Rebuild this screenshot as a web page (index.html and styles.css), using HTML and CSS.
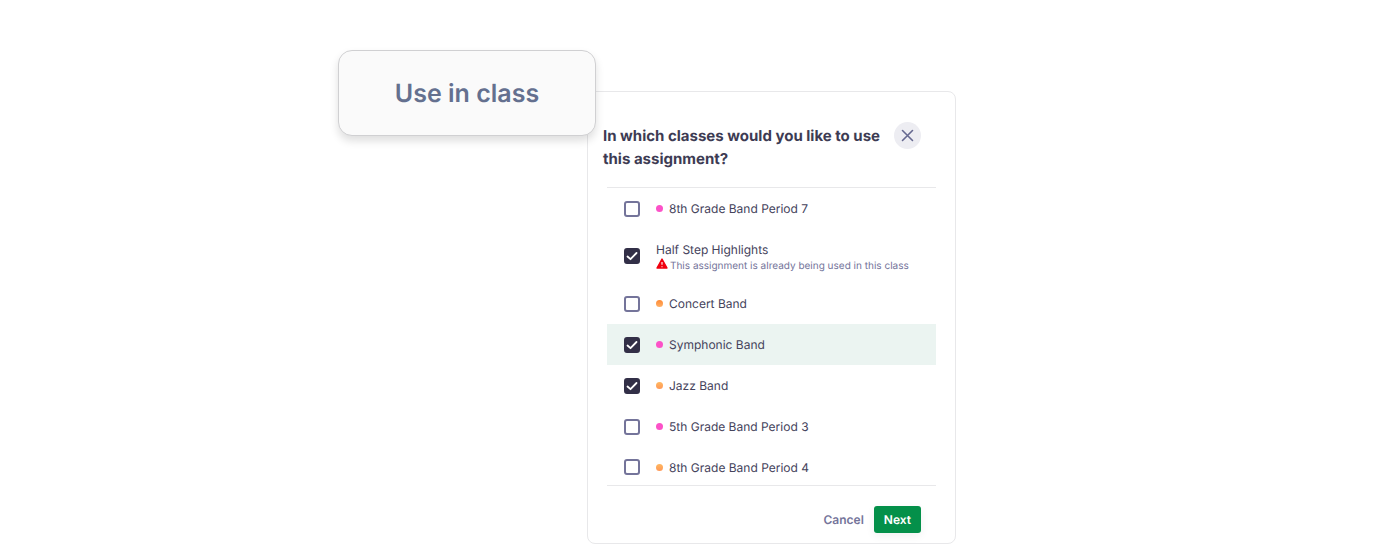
FILE: index.html
```html
<!DOCTYPE html>
<html lang="en">
<head>
    <meta charset="UTF-8">
    <meta name="viewport" content="width=device-width, initial-scale=1.0">
    <title>Use in class</title>
    <link rel="stylesheet" href="styles.css">
</head>
<body>
    <main class="stage">
        <button type="button" class="use-button">Use in class</button>
        <form class="dialog">
            <div class="dialog-header">
                <h1>In which classes would you like to use this assignment?</h1>
                <button type="button" class="close" aria-label="Close">
                    <svg width="13" height="13" viewBox="0 0 13 13" fill="none" stroke="currentColor" stroke-width="1.6" stroke-linecap="round">
                        <path d="M1.5 1.5l10 10M11.5 1.5l-10 10"/>
                    </svg>
                </button>
            </div>
            <div class="class-list">
                <label class="row">
                    <input type="checkbox">
                    <span class="dot pink"></span>
                    <span>8th Grade Band Period 7</span>
                </label>
                <label class="row row-tall">
                    <input type="checkbox" checked>
                    <span class="details">
                        <span>Half Step Highlights</span>
                        <span class="warning">
                            <svg width="12" height="11" viewBox="0 0 12 11">
                                <path d="M6 1L11 10H1z" fill="#f0000f" stroke="#f0000f" stroke-width="1.4" stroke-linejoin="round"/>
                                <path d="M6 4v2.8M6 8.2v1" stroke="#fff" stroke-width="1.1"/>
                            </svg>
                            <span>This assignment is already being used in this class</span>
                        </span>
                    </span>
                </label>
                <label class="row">
                    <input type="checkbox">
                    <span class="dot orange"></span>
                    <span>Concert Band</span>
                </label>
                <label class="row row-active">
                    <input type="checkbox" checked>
                    <span class="dot pink"></span>
                    <span>Symphonic Band</span>
                </label>
                <label class="row">
                    <input type="checkbox" checked>
                    <span class="dot amber"></span>
                    <span>Jazz Band</span>
                </label>
                <label class="row">
                    <input type="checkbox">
                    <span class="dot pink"></span>
                    <span>5th Grade Band Period 3</span>
                </label>
                <label class="row">
                    <input type="checkbox">
                    <span class="dot amber"></span>
                    <span>8th Grade Band Period 4</span>
                </label>
            </div>
            <div class="dialog-footer">
                <button type="button" class="cancel">Cancel</button>
                <button type="button" class="next">Next</button>
            </div>
        </form>
    </main>
</body>
</html>
```
FILE: styles.css
```css
* {
    box-sizing: border-box;
}
body {
    margin: 0;
    background-color: #fff;
    font-family: Inter, "Liberation Sans", sans-serif;
    text-rendering: geometricPrecision;
    color: #45435c;
}
button {
    border: none;
    padding: 0;
    background: none;
    font-family: inherit;
    text-rendering: inherit;
    cursor: pointer;
}
.stage {
    display: flex;
    justify-content: center;
    align-items: flex-start;
    padding: 50px 106px 16px 0;
}
.use-button {
    position: relative;
    z-index: 1;
    width: 258px;
    padding: 26px 0 24px;
    border: 1px solid #d0d0d2;
    border-radius: 14px;
    background-color: #fafafa;
    box-shadow: 0 5px 8px rgba(0, 0, 0, 0.13);
    color: #64708f;
    font-size: 25px;
    font-weight: 600;
    line-height: 34px;
}
.dialog {
    max-width: 369px;
    margin: 41px 0 0 -9px;
    border: 1px solid #e8e8ea;
    border-radius: 8px;
}
.dialog-header {
    display: flex;
    justify-content: space-between;
    align-items: flex-start;
    padding: 30px 34px 17px 15px;
}
.dialog-header h1 {
    margin: 0;
    padding-top: 2px;
    color: #3d3b53;
    font-size: 15px;
    font-weight: 700;
    line-height: 23px;
}
.close {
    display: flex;
    flex-shrink: 0;
    justify-content: center;
    align-items: center;
    width: 27px;
    height: 27px;
    border-radius: 50%;
    background-color: #ededf2;
    color: #666990;
}
.class-list {
    margin: 0 19px;
    border-top: 1px solid #e8e8ea;
    border-bottom: 1px solid #e8e8ea;
}
.row {
    display: flex;
    align-items: center;
    height: 41px;
    padding-left: 17px;
    font-size: 12px;
    line-height: 17px;
}
.row:last-child {
    height: 38px;
    padding-top: 2px;
}
.row-tall {
    height: 54px;
}
.row-active {
    background-color: #ebf4f1;
}
.row input {
    appearance: none;
    flex-shrink: 0;
    width: 16px;
    height: 16px;
    margin: 0 16px 0 0;
    border: 2px solid #74749a;
    border-radius: 3px;
    background-color: #fff;
}
.row input:checked {
    border-color: #322f47;
    background: #322f47 url("data:image/svg+xml,%3Csvg xmlns='http://www.w3.org/2000/svg' viewBox='0 0 12 12' fill='none' stroke='white' stroke-width='1.8' stroke-linecap='round' stroke-linejoin='round'%3E%3Cpath d='M1.5 6.5l3 2.7 6-6.2'/%3E%3C/svg%3E") center / 12px no-repeat;
}
.dot {
    width: 7px;
    height: 7px;
    margin-right: 6px;
    border-radius: 50%;
}
.pink {
    background-color: #fc52c8;
}
.orange {
    background: linear-gradient(#ff8a35, #ffb066);
}
.amber {
    background: linear-gradient(#ffb860, #ff9858);
}
.details {
    display: flex;
    flex-direction: column;
    padding-top: 3px;
}
.warning {
    display: flex;
    align-items: flex-start;
    gap: 2px;
    color: #74749a;
    font-size: 10px;
}
.dialog-footer {
    display: flex;
    justify-content: flex-end;
    gap: 10px;
    padding: 20px 34px 10px;
}
.cancel,
.next {
    font-size: 12px;
    font-weight: 600;
    line-height: 27px;
}
.cancel {
    color: #74749a;
}
.next {
    padding: 0 10px;
    border-radius: 3px;
    background-color: #04904a;
    box-shadow: 0 3px 10px rgba(0, 0, 0, 0.06);
    color: #fff;
}
```
